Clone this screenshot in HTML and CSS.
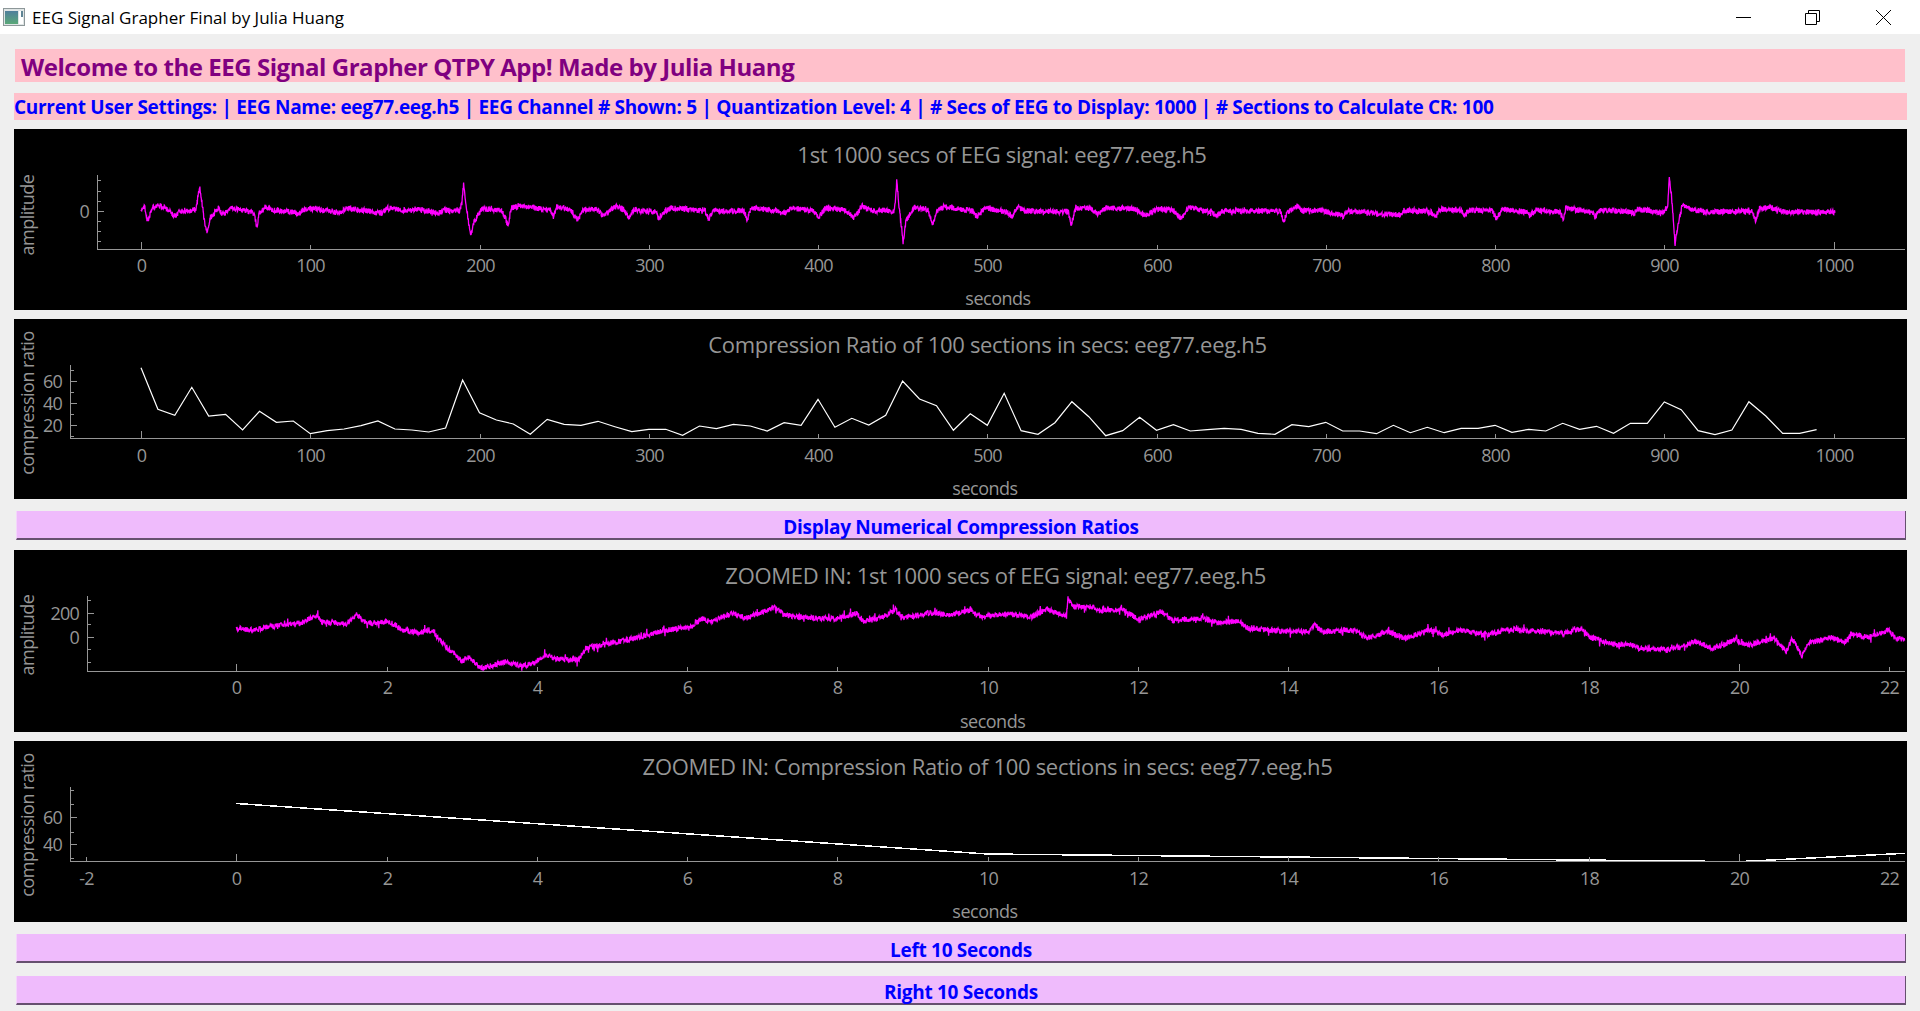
FILE: index.html
```html
<!DOCTYPE html>
<html lang="en">
<head>
  <meta charset="UTF-8">
  <title>EEG Signal Grapher Final by Julia Huang</title>
  <link rel="stylesheet" href="styles.css">
</head>
<body>
  <div class="titlebar">
    <svg class="app-icon" width="22" height="18" viewBox="0 0 22 18">
      <defs>
        <linearGradient id="iconFill" x1="0" y1="0" x2="0" y2="1">
          <stop offset="0" stop-color="#4f7f9c"/>
          <stop offset="1" stop-color="#5aa878"/>
        </linearGradient>
      </defs>
      <rect x="0.5" y="0.5" width="21" height="17" fill="#dfe5e5" stroke="#8d9799"/>
      <rect x="2" y="3" width="13" height="13" fill="url(#iconFill)"/>
      <rect x="16" y="3" width="4" height="13" fill="#fff"/>
      <rect x="18" y="3" width="2" height="6" fill="#5f8494"/>
    </svg>
    <span class="window-title">EEG Signal Grapher Final by Julia Huang</span>
    <div class="window-buttons">
      <svg width="15" height="15" viewBox="0 0 15 15"><path d="M0 7.5H15" stroke="#000" fill="none"/></svg>
      <svg class="restore-icon" width="15" height="15" viewBox="0 0 15 15"><path d="M.5 3.5H11.5V14.5H.5ZM3.5 3.5V.5H14.5V11.5H11.5" stroke="#000" fill="none"/></svg>
      <svg width="15" height="15" viewBox="0 0 15 15"><path d="M0 0L15 15M15 0L0 15" stroke="#000" fill="none"/></svg>
    </div>
  </div>

  <h1 class="welcome">Welcome to the EEG Signal Grapher QTPY App! Made by Julia Huang</h1>
  <div class="settings">Current User Settings: | EEG Name: eeg77.eeg.h5 | EEG Channel # Shown: 5 | Quantization Level: 4 | # Secs of EEG to Display: 1000 | # Sections to Calculate CR: 100</div>

  <div class="plot plot-signal" id="plotSignal"></div>
  <div class="plot plot-ratio" id="plotRatio"></div>
  <button class="action action-display">Display Numerical Compression Ratios</button>
  <div class="plot plot-zoom-signal" id="plotZoomSignal"></div>
  <div class="plot plot-zoom-ratio" id="plotZoomRatio"></div>
  <button class="action action-left">Left 10 Seconds</button>
  <button class="action action-right">Right 10 Seconds</button>

  <script src="script.js"></script>
</body>
</html>
```

FILE: styles.css
```css
body {
  margin: 0;
  background: #efefef;
  font-family: "Open Sans", "Noto Sans", sans-serif;
  overflow: hidden;
}
.titlebar {
  display: flex;
  align-items: center;
  height: 34px;
  background: #fff;
  padding-left: 3px;
}
.app-icon {
  margin-right: 7px;
}
.window-title {
  font-size: 17px;
  color: #000;
}
.window-buttons {
  display: flex;
  gap: 54px;
  margin-left: auto;
  margin-right: 29px;
}
.restore-icon {
  margin-right: 2px;
}
.welcome {
  margin: 15px 15px 0;
  height: 33px;
  padding-left: 6px;
  background: #ffc0cb;
  color: #800080;
  font-size: 24px;
  line-height: 35px;
  font-weight: 700;
  letter-spacing: -0.45px;
}
.settings {
  margin: 11px 13px 0 14px;
  height: 27px;
  background: #ffc0cb;
  color: #0000ff;
  font-size: 19px;
  line-height: 29px;
  font-weight: 700;
  letter-spacing: -0.3px;
  white-space: nowrap;
}
.plot {
  margin: 9px 13px 0 14px;
  background: #000;
}
.plot svg {
  display: block;
}
.plot-signal { height: 181px; }
.plot-ratio { height: 180px; }
.plot-zoom-signal { height: 182px; margin-top: 10px; }
.plot-zoom-ratio { height: 181px; }
.axis-line {
  stroke: #969696;
  fill: none;
  shape-rendering: crispEdges;
}
.plot-title {
  fill: #969696;
  font-size: 22px;
  text-anchor: middle;
  letter-spacing: -0.3px;
}
.axis-label {
  fill: #969696;
  font-size: 18px;
  text-anchor: middle;
  letter-spacing: -0.5px;
}
.tick-label {
  fill: #969696;
  font-size: 18px;
  letter-spacing: -0.8px;
}
.trace-eeg {
  stroke: #ff00ff;
  stroke-width: 1.3;
  fill: none;
}
.trace-ratio {
  stroke: #fff;
  stroke-width: 1.2;
  fill: none;
}
.trace-flat {
  stroke: #fff;
  stroke-width: 1.5;
  fill: none;
  shape-rendering: crispEdges;
}
.action {
  display: block;
  width: 1890px;
  height: 29px;
  margin: 12px 0 0 16px;
  padding: 3px 0 0;
  background: #efbbfc;
  border: none;
  border-left: 1px solid #f4d6fb;
  border-right: 1px solid #66506f;
  border-bottom: 2px solid #66506f;
  color: #0000ff;
  font-family: inherit;
  font-size: 19px;
  font-weight: 700;
  letter-spacing: -0.3px;
}
.action-right {
  margin-top: 13px;
}
```

FILE: script.js
```js
const NS = "http://www.w3.org/2000/svg";
const PLOT_LEFT = 14;
const PLOT_WIDTH = 1893;

// traces are [x, y]; eeg y is px offset from the baseline, ratio y is px from plot top
const eegFull = [[0,0],[1,-4],[2.3,-3],[3.5,9],[4.7,7],[6.4,-3],[10.7,-6],[14.3,-3],[18,2],[20.4,5],[22.8,0],[28.8,0],[32.4,-2],[34.6,-24],[35.8,-11],[37.3,9],[39,22],[40.9,7],[45.7,-3],[48.8,4],[52.9,-4],[61.4,0],[66.7,2],[68.4,16],[69.8,2],[73.4,-4],[78.2,-1],[93.9,2],[98.8,-3],[116.8,2],[121.7,-3],[142,2],[145.8,-3],[157.8,0],[161.4,-2],[175.9,2],[179.5,-1],[188,0],[189.6,-8],[190.6,-27],[192,-8],[194.8,26],[196.4,12],[201.2,-2],[213,-1],[217,14],[218.7,-3],[224,-5],[242,-1],[243.5,7],[245.8,-4],[254,-1],[257.9,9],[261.5,-1],[268.8,-2],[273.5,5],[280.8,-5],[285.6,-1],[288,7],[291.6,-2],
  [295,0],[304.4,1],[306,9],[308,2],[312.9,-3],[333.4,0],[335.3,8],[338.2,0],[356.3,0],[358,9],[360.4,-3],[376.8,0],[379.7,3],[384.5,-3],[397.3,0],[400.4,6],[404.5,-3],[415.4,-1],[421.4,7],[426.2,-5],[432.2,0],[444.8,0],[445.7,-10],[446.5,-31],[447.7,-8],[450.3,30],[452,10],[456.8,-4],[464.8,-2],[467.7,14],[470.8,-1],[474.4,-4],[491.3,0],[494.2,6],[498.6,-3],[511.8,1],[514.7,6],[517.8,-4],[522.7,0],[548,1],[549.4,14],[552.3,-3],[560,-3],[566,3],[569.7,-3],[587.8,-2],[593.3,5],[599.8,-2],[610.7,0],[614.3,8],[619.1,-4],[633.6,2],[635.3,6],[638.4,0],
  [673,0],[675,10],[677.8,1],[680,-2],[683.4,-5],[686.3,0],[697,-1],[710.4,5],[712.8,0],[726,2],[743.7,4],[746.5,-1],[762,1],[765,5],[767.5,-2],[780.3,0],[782,5],[785,-1],[798.4,0],[800.8,8],[804.4,-2],[818.9,1],[820.6,5],[823.7,-1],[838.2,1],[840.4,8],[841.8,-3],[858.2,2],[859,6],[862.3,-1],[880.4,1],[881.8,4],[884,-2],[896,1],[898.5,3],[902,-4],[903,-33],[904,-20],[905,0],[906.4,34],[907.4,20],[910.5,-5],[912.5,-6],[916.6,-1],[923.8,1],[951.5,0],[953.9,10],[956.3,-2],[961,-4],[970.8,1],[998.5,1],[1001,1]];

const ratioFull = [48.7,90.3,96.3,68.3,97,95.3,111,92.3,103.3,102,114.7,111.7,110,106.7,102,110,111,113,109,61,93.7,101,105,115.3,100.3,105.3,106.3,102.3,107.7,112.7,
  110.3,110.3,116.3,107,109.7,105.3,107,112,103.7,106.3,80.3,108.3,99.3,106,96.3,62,80,86.7,111.3,94.7,106.3,74.3,111.7,115.3,103.7,82.7,97.7,116.7,111.7,98.3,111.3,105.7,112,110.7,109.3,110.3,114.3,115.3,
  105.7,107.7,103.3,112,112,114.7,106.3,113.7,108.3,113.7,109.3,109.3,106.3,113.3,110.3,112,104.3,110.3,107.3,114.3,104.3,104.3,83,90.7,111.7,115.7,111,82.7,97,114.3,114.3,110.7];

const eegZoom = [[0,78.3],[.22,80],[.55,75],[.87,72.7],[1.08,65],[1.14,71.7],[1.47,73.3],[1.6,65],[1.72,73.3],[2.04,71.7],[2.15,76.7],[2.23,80.7],[2.4,82.3],[2.62,80.7],[2.7,90],[3,111.7],[3.1,106.7],[3.25,118.3],[3.6,111.7],[3.8,116],[3.97,113.3],[4.1,105],[4.3,109.3],[4.55,110],[4.65,98.3],[4.95,93.3],[5.17,90],[5.37,87.3],
  [5.65,81],[6.08,76.7],[6.19,68.3],[6.32,71.7],[6.62,63.3],[6.79,68.3],[7.17,57.3],[7.3,65.7],[7.76,68.3],[7.98,69],[8.25,63.3],[8.36,71.7],[8.63,66.7],[8.77,59.3],[8.88,68.3],[9.23,62.7],[9.5,65],[9.78,60],[9.91,66.7],[10.27,64],[10.59,66.7],[10.78,59.3],[11.05,66.7],[11.07,48.3],[11.13,56.7],[11.43,57.3],[11.49,61.7],[11.79,58.3],[12,69.3],[12.3,61.7],[12.47,70.7],[12.85,68.3],[13.09,73.3],[13.33,70.7],[13.47,78.3],[13.89,81],
  [14.27,81.7],[14.35,75],[14.46,81.7],[14.87,80],[15.06,88.3],[15.33,81.7],[15.57,88.3],[15.87,80],[16.06,85],[16.28,80],[16.66,85],[16.91,79.3],[17.69,83.3],[17.9,78.3],[18.02,87.3],[18.37,95],[18.51,93.3],[18.67,98.3],[19.05,100],[19.43,91.7],[19.65,98.3],[19.95,90],[20.14,95],[20.47,88.3],[20.63,101.7],[20.71,88.3],[20.84,106],[20.93,93.3],[21.23,87.3],[21.42,91.7],[21.5,84],[21.72,87.3],[21.99,80],[22.07,87.3],[22.21,90]];

const tens = Array.from({length: 11}, (_, i) => i * 100);
const twos = Array.from({length: 12}, (_, i) => i * 2);

// small seeded generator so the noise is the same on every load
function makeRandom(seed) {
  let s = seed;
  return () => {
    s = (s * 1664525 + 1013904223) % 4294967296;
    return s / 4294967296;
  };
}

function noisy(points, toX, toY, step, amp, spike) {
  const rand = makeRandom(77);
  const out = [];
  for (let i = 0; i < points.length - 1; i++) {
    const [x0, y0] = points[i];
    const [x1, y1] = points[i + 1];
    const px0 = toX(x0);
    const px1 = toX(x1);
    const n = Math.max(1, Math.round((px1 - px0) / step));
    for (let j = 0; j < n; j++) {
      const t = j / n;
      let d = (rand() - 0.5) * amp;
      if (rand() < 0.04) d *= spike;
      out.push([px0 + (px1 - px0) * t, toY(y0 + (y1 - y0) * t) + d]);
    }
  }
  return out;
}

function el(parent, name, attrs, text) {
  const node = document.createElementNS(NS, name);
  for (const key in attrs) node.setAttribute(key, attrs[key]);
  if (text !== undefined) node.textContent = text;
  parent.appendChild(node);
  return node;
}

function toPath(points) {
  return "M" + points.map(p => p[0].toFixed(1) + " " + p[1].toFixed(1)).join("L");
}

function drawPlot(cfg) {
  const host = document.getElementById(cfg.id);
  const h = host.clientHeight;
  const svg = el(host, "svg", {width: PLOT_WIDTH, height: h, viewBox: `${PLOT_LEFT} 0 ${PLOT_WIDTH} ${h}`});

  el(svg, "path", {d: toPath(cfg.trace), class: cfg.traceClass});

  const xAt = s => cfg.x0 + cfg.xScale * s;
  let axis = `M${cfg.axisLeft + .5} ${cfg.axisTop}V${cfg.axisY + .5}H1905`;
  cfg.xTicks.forEach(s => {
    const x = Math.round(xAt(s)) + .5;
    const len = cfg.longX.includes(s) ? 7 : 4;
    axis += `M${x} ${cfg.axisY}V${cfg.axisY - len}`;
    el(svg, "text", {class: "tick-label", x: x, y: cfg.labelY, "text-anchor": "middle", "dominant-baseline": "central"}, s);
  });
  cfg.yMinor.forEach(y => {
    axis += `M${cfg.axisLeft} ${Math.round(y) + .5}H${cfg.axisLeft + 4}`;
  });
  cfg.yMajor.forEach(([y, label]) => {
    axis += `M${cfg.axisLeft} ${Math.round(y) + .5}H${cfg.axisLeft + 7}`;
    el(svg, "text", {class: "tick-label", x: cfg.axisLeft - 8, y: y, "text-anchor": "end", "dominant-baseline": "central"}, label);
  });
  el(svg, "path", {d: axis, class: "axis-line"});

  el(svg, "text", {class: "plot-title", x: cfg.titleX, y: 25, "dominant-baseline": "central"}, cfg.title);
  el(svg, "text", {class: "axis-label", x: cfg.secondsX, y: cfg.secondsY, "dominant-baseline": "central"}, "seconds");
  el(svg, "text", {class: "axis-label", transform: `translate(27 ${cfg.sideY}) rotate(-90)`, "dominant-baseline": "central"}, cfg.side);
}

const fullX = s => 141 + 1.6925 * s;
const zoomX = s => 236.3 + 75.13 * s;

drawPlot({
  id: "plotSignal", title: "1st 1000 secs of EEG signal: eeg77.eeg.h5", titleX: 1002,
  side: "amplitude", sideY: 86, secondsX: 998, secondsY: 169, labelY: 136,
  axisLeft: 97, axisTop: 46, axisY: 120, x0: 141, xScale: 1.6925, xTicks: tens, longX: [0, 1000],
  yMajor: [[82, "0"]], yMinor: [51, 62, 72, 92, 102, 112],
  trace: noisy(eegFull, fullX, d => 82 + d, 0.3, 5.5, 1.4), traceClass: "trace-eeg"
});

drawPlot({
  id: "plotRatio", title: "Compression Ratio of 100 sections in secs: eeg77.eeg.h5", titleX: 987.5,
  side: "compression ratio", sideY: 84, secondsX: 985, secondsY: 169, labelY: 136,
  axisLeft: 70, axisTop: 46, axisY: 119, x0: 141, xScale: 1.6925, xTicks: tens, longX: [0],
  yMajor: [[61.7, "60"], [83.7, "40"], [105.7, "20"]], yMinor: [50.7, 72.7, 94.7, 116.7],
  trace: ratioFull.map((y, i) => [fullX(i * 10), y]), traceClass: "trace-ratio"
});

drawPlot({
  id: "plotZoomSignal", title: "ZOOMED IN: 1st 1000 secs of EEG signal: eeg77.eeg.h5", titleX: 995.7,
  side: "amplitude", sideY: 85, secondsX: 992.6, secondsY: 171, labelY: 137,
  axisLeft: 87, axisTop: 46, axisY: 121, x0: 236.3, xScale: 75.13, xTicks: twos, longX: [0, 20],
  yMajor: [[62.7, "200"], [86.7, "0"]], yMinor: [50, 74.3, 99.3, 111.7],
  trace: noisy(eegZoom, zoomX, y => y, 0.35, 5.5, 2.4), traceClass: "trace-eeg"
});

drawPlot({
  id: "plotZoomRatio", title: "ZOOMED IN: Compression Ratio of 100 sections in secs: eeg77.eeg.h5", titleX: 987.6,
  side: "compression ratio", sideY: 84, secondsX: 985, secondsY: 170, labelY: 137,
  axisLeft: 70, axisTop: 46, axisY: 120, x0: 236.3, xScale: 75.13, xTicks: [-2].concat(twos), longX: [0, 20],
  yMajor: [[76.3, "60"], [103.3, "40"]], yMinor: [49, 62.7, 90.7, 117.3],
  trace: [[0, 62.5], [10, 113], [20, 120.6], [22.21, 112.3]].map(p => [zoomX(p[0]), p[1]]), traceClass: "trace-flat"
});
```
